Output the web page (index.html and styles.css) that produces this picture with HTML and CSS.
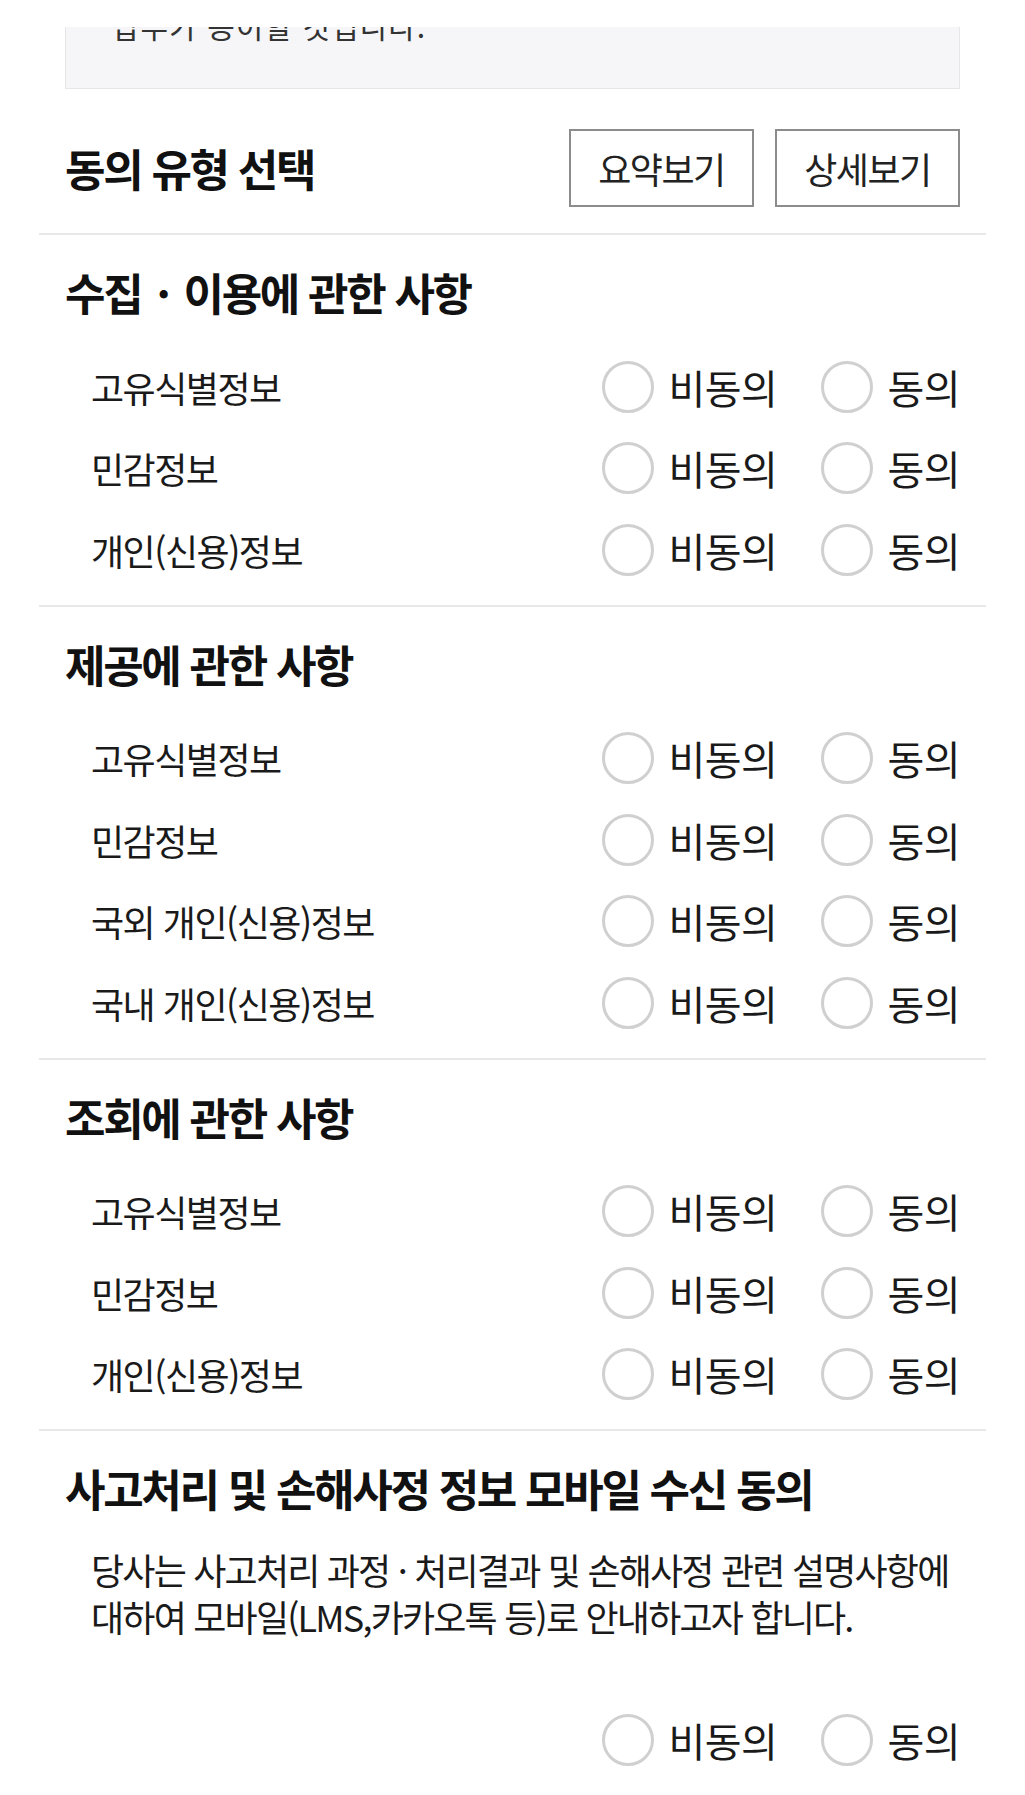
FILE: index.html
```html
<!DOCTYPE html>
<html lang="ko">
<head>
<meta charset="utf-8">
<title>동의 유형 선택</title>
<link rel="stylesheet" href="styles.css">
</head>
<body>
<div class="page">
  <div class="terms-box">
    <p class="terms-text">납부가 용이할 것입니다.</p>
  </div>

  <section class="type-head">
    <h2 class="title">동의 유형 선택</h2>
    <div class="btns">
      <button class="btn" type="button">요약보기</button>
      <button class="btn" type="button">상세보기</button>
    </div>
  </section>

  <section class="group">
    <h3 class="group-title">수집<span class="sep"> · </span>이용에 관한 사항</h3>
    <div class="row"><span class="label">고유식별정보</span><div class="choices"><span class="radio"><i class="dot"></i>비동의</span><span class="radio"><i class="dot"></i>동의</span></div></div>
    <div class="row"><span class="label">민감정보</span><div class="choices"><span class="radio"><i class="dot"></i>비동의</span><span class="radio"><i class="dot"></i>동의</span></div></div>
    <div class="row"><span class="label">개인(신용)정보</span><div class="choices"><span class="radio"><i class="dot"></i>비동의</span><span class="radio"><i class="dot"></i>동의</span></div></div>
  </section>

  <section class="group">
    <h3 class="group-title">제공에 관한 사항</h3>
    <div class="row"><span class="label">고유식별정보</span><div class="choices"><span class="radio"><i class="dot"></i>비동의</span><span class="radio"><i class="dot"></i>동의</span></div></div>
    <div class="row"><span class="label">민감정보</span><div class="choices"><span class="radio"><i class="dot"></i>비동의</span><span class="radio"><i class="dot"></i>동의</span></div></div>
    <div class="row"><span class="label">국외 개인(신용)정보</span><div class="choices"><span class="radio"><i class="dot"></i>비동의</span><span class="radio"><i class="dot"></i>동의</span></div></div>
    <div class="row"><span class="label">국내 개인(신용)정보</span><div class="choices"><span class="radio"><i class="dot"></i>비동의</span><span class="radio"><i class="dot"></i>동의</span></div></div>
  </section>

  <section class="group">
    <h3 class="group-title">조회에 관한 사항</h3>
    <div class="row"><span class="label">고유식별정보</span><div class="choices"><span class="radio"><i class="dot"></i>비동의</span><span class="radio"><i class="dot"></i>동의</span></div></div>
    <div class="row"><span class="label">민감정보</span><div class="choices"><span class="radio"><i class="dot"></i>비동의</span><span class="radio"><i class="dot"></i>동의</span></div></div>
    <div class="row"><span class="label">개인(신용)정보</span><div class="choices"><span class="radio"><i class="dot"></i>비동의</span><span class="radio"><i class="dot"></i>동의</span></div></div>
  </section>

  <section class="group last">
    <h3 class="group-title">사고처리 및 손해사정 정보 모바일 수신 동의</h3>
    <p class="desc">당사는 사고처리 과정 · 처리결과 및 손해사정 관련 설명사항에<br>대하여 모바일(LMS,카카오톡 등)로 안내하고자 합니다.</p>
    <div class="row row-end"><div class="choices"><span class="radio"><i class="dot"></i>비동의</span><span class="radio"><i class="dot"></i>동의</span></div></div>
  </section>
</div>
</body>
</html>
```

FILE: styles.css
```css
html, body {
  margin: 0;
  padding: 0;
  background: #ffffff;
}

body {
  font-family: "Noto Sans CJK KR", "Noto Sans", sans-serif;
  color: #1a1a1a;
}

.page {
  width: 1025px;
  height: 1795px;
  overflow: hidden;
  padding: 27px 39px 0;
  box-sizing: border-box;
}

.terms-box {
  margin: 0 26px;
  height: 62px;
  background: #f6f6f8;
  border: 1px solid #e6e6e6;
  border-top: none;
  overflow: hidden;
  box-sizing: border-box;
}

.terms-text {
  margin: -24px 0 0 46px;
  font-size: 30px;
  line-height: 44px;
  letter-spacing: 1px;
  color: #333333;
}

.type-head {
  display: flex;
  align-items: center;
  justify-content: space-between;
  padding: 40px 26px 26px;
  border-bottom: 2px solid #e8e8e8;
}

.title {
  margin: 0;
  font-size: 44px;
  font-weight: 700;
  letter-spacing: -2.3px;
  line-height: 56px;
  color: #111111;
}

.btns {
  display: flex;
  gap: 21px;
}

.btn {
  width: 185px;
  height: 78px;
  border: 2px solid #8c8c8c;
  background: #ffffff;
  font-family: inherit;
  font-size: 36px;
  letter-spacing: -1.5px;
  color: #222222;
  padding: 0;
  cursor: pointer;
}

.group {
  padding: 29px 26px 14px;
  border-bottom: 2px solid #e8e8e8;
}

.group.last {
  border-bottom: none;
  padding-bottom: 0;
}

.group-title {
  margin: 0 0 26px;
  font-size: 44px;
  font-weight: 700;
  letter-spacing: -2.3px;
  line-height: 56px;
  color: #111111;
}

.sep {
  margin: 0 5px;
}

.row {
  height: 81.5px;
  display: flex;
  align-items: center;
  justify-content: space-between;
}

.row-end {
  justify-content: flex-end;
}

.label {
  padding-left: 26px;
  font-size: 36px;
  letter-spacing: -1.5px;
  color: #1a1a1a;
}

.choices {
  display: flex;
  align-items: center;
  gap: 44px;
}

.radio {
  display: flex;
  align-items: center;
  gap: 14px;
  font-size: 40px;
  letter-spacing: -0.5px;
  color: #1a1a1a;
}

.dot {
  width: 52px;
  height: 52px;
  box-sizing: border-box;
  border: 3px solid #d0d0d0;
  border-radius: 50%;
  background: #ffffff;
}

.desc {
  margin: 30px 0 59px;
  padding-left: 26px;
  font-size: 36px;
  line-height: 47px;
  letter-spacing: -1.8px;
  color: #1a1a1a;
}
```
